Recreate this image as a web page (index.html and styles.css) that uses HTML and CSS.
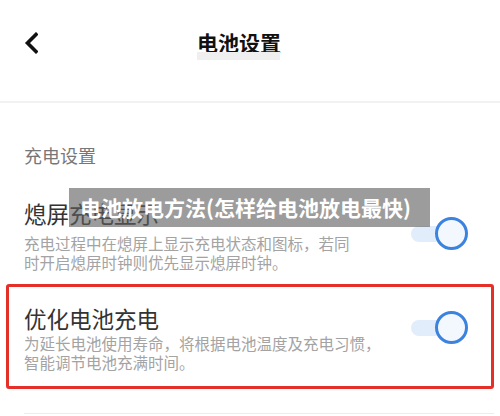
FILE: index.html
```html
<!DOCTYPE html>
<html lang="zh-CN">
<head>
<meta charset="utf-8">
<title>电池设置</title>
<link rel="stylesheet" href="styles.css">
</head>
<body>
<div class="page">
  <header class="topbar">
    <svg class="back" width="14" height="22" viewBox="0 0 14 22"><path d="M12 2.5 L3.5 11 L12 19.5" fill="none" stroke="#111" stroke-width="3.6" stroke-linecap="square" stroke-linejoin="miter"/></svg>
    <div class="title-wrap">
      <h1 class="title">电池设置</h1>
      <div class="title-band"></div>
    </div>
  </header>

  <main class="content">
    <div class="section-label">充电设置</div>

    <div class="item item-first">
      <div class="item-text">
        <div class="item-title">熄屏充电显示</div>
        <div class="item-desc">充电过程中在熄屏上显示充电状态和图标，若同<br>时开启熄屏时钟则优先显示熄屏时钟。</div>
      </div>
      <div class="toggle toggle-first"><span class="track"></span><span class="knob"></span></div>
    </div>

    <div class="item item-boxed">
      <div class="item-text">
        <div class="item-title">优化电池充电</div>
        <div class="item-desc desc-tight">为延长电池使用寿命，将根据电池温度及充电习惯，<br>智能调节电池充满时间。</div>
      </div>
      <div class="toggle toggle-second"><span class="track"></span><span class="knob"></span></div>
    </div>

    <div class="bottom-line"></div>
  </main>

  <div class="caption">电池放电方法(怎样给电池放电最快)</div>
</div>
</body>
</html>
```

FILE: styles.css
```css
* { box-sizing: border-box; margin: 0; padding: 0; }
html, body { background: #fff; }
body {
  width: 500px;
  height: 416px;
  overflow: hidden;
  font-family: "Noto Sans CJK SC", "Noto Sans", sans-serif;
}
.page { position: relative; width: 500px; height: 416px; }

.topbar {
  height: 103px;
  display: flex;
  align-items: flex-start;
  padding: 32px 0 0 24px;
  border-bottom: 2px solid #f2f2f2;
}
.back { display: block; margin-top: 0; flex: none; }
.title-wrap { margin-left: 159px; display: flex; flex-direction: column; }
.title {
  font-size: 21px;
  line-height: 21px;
  font-weight: 700;
  color: #111;
  letter-spacing: 0;
}
.title-band { height: 8px; width: 83px; background: #efefef; margin-top: -1px; }

.content { padding: 0 6px; }
.section-label {
  margin: 43px 0 0 18px;
  font-size: 18px;
  line-height: 18px;
  color: #777;
}

.item { display: flex; align-items: flex-start; }
.item-first { margin: 36px 0 0 18px; padding-right: 26px; justify-content: space-between; }
.item-text { display: flex; flex-direction: column; }
.item-title {
  font-size: 22.5px;
  line-height: 26px;
  color: #333;
}
.item-desc {
  margin-top: 8px;
  font-size: 15.5px;
  line-height: 19px;
  color: #a3a3a3;
}
.desc-tight { margin-top: 3px; }

.item-boxed {
  margin-top: 12px;
  height: 105px;
  border: 3px solid #e5302a;
  border-radius: 3px;
  padding: 18px 23px 0 15px;
  justify-content: space-between;
}

.toggle { position: relative; width: 57px; height: 32px; flex: none; }
.toggle-first { margin-top: 17px; }
.toggle-second { margin-top: 6px; }
.track {
  position: absolute;
  left: 0; top: 9px;
  width: 44px; height: 16px;
  border-radius: 8px;
  background: #e2edfb;
}
.knob {
  position: absolute;
  right: 0; top: 0;
  width: 33px; height: 33px;
  border-radius: 50%;
  border: 3.5px solid #3b83df;
  background: #f3f8fe;
}

.bottom-line { margin: 24px 0 0 18px; height: 1px; background: #ececec; }

.caption {
  position: absolute;
  left: 69px; top: 188px;
  width: 361px; height: 39px;
  background: rgba(95, 95, 95, 0.62);
  color: #fff;
  font-weight: 700;
  font-size: 21px;
  line-height: 39px;
  padding-left: 11px;
  white-space: nowrap;
}
```
